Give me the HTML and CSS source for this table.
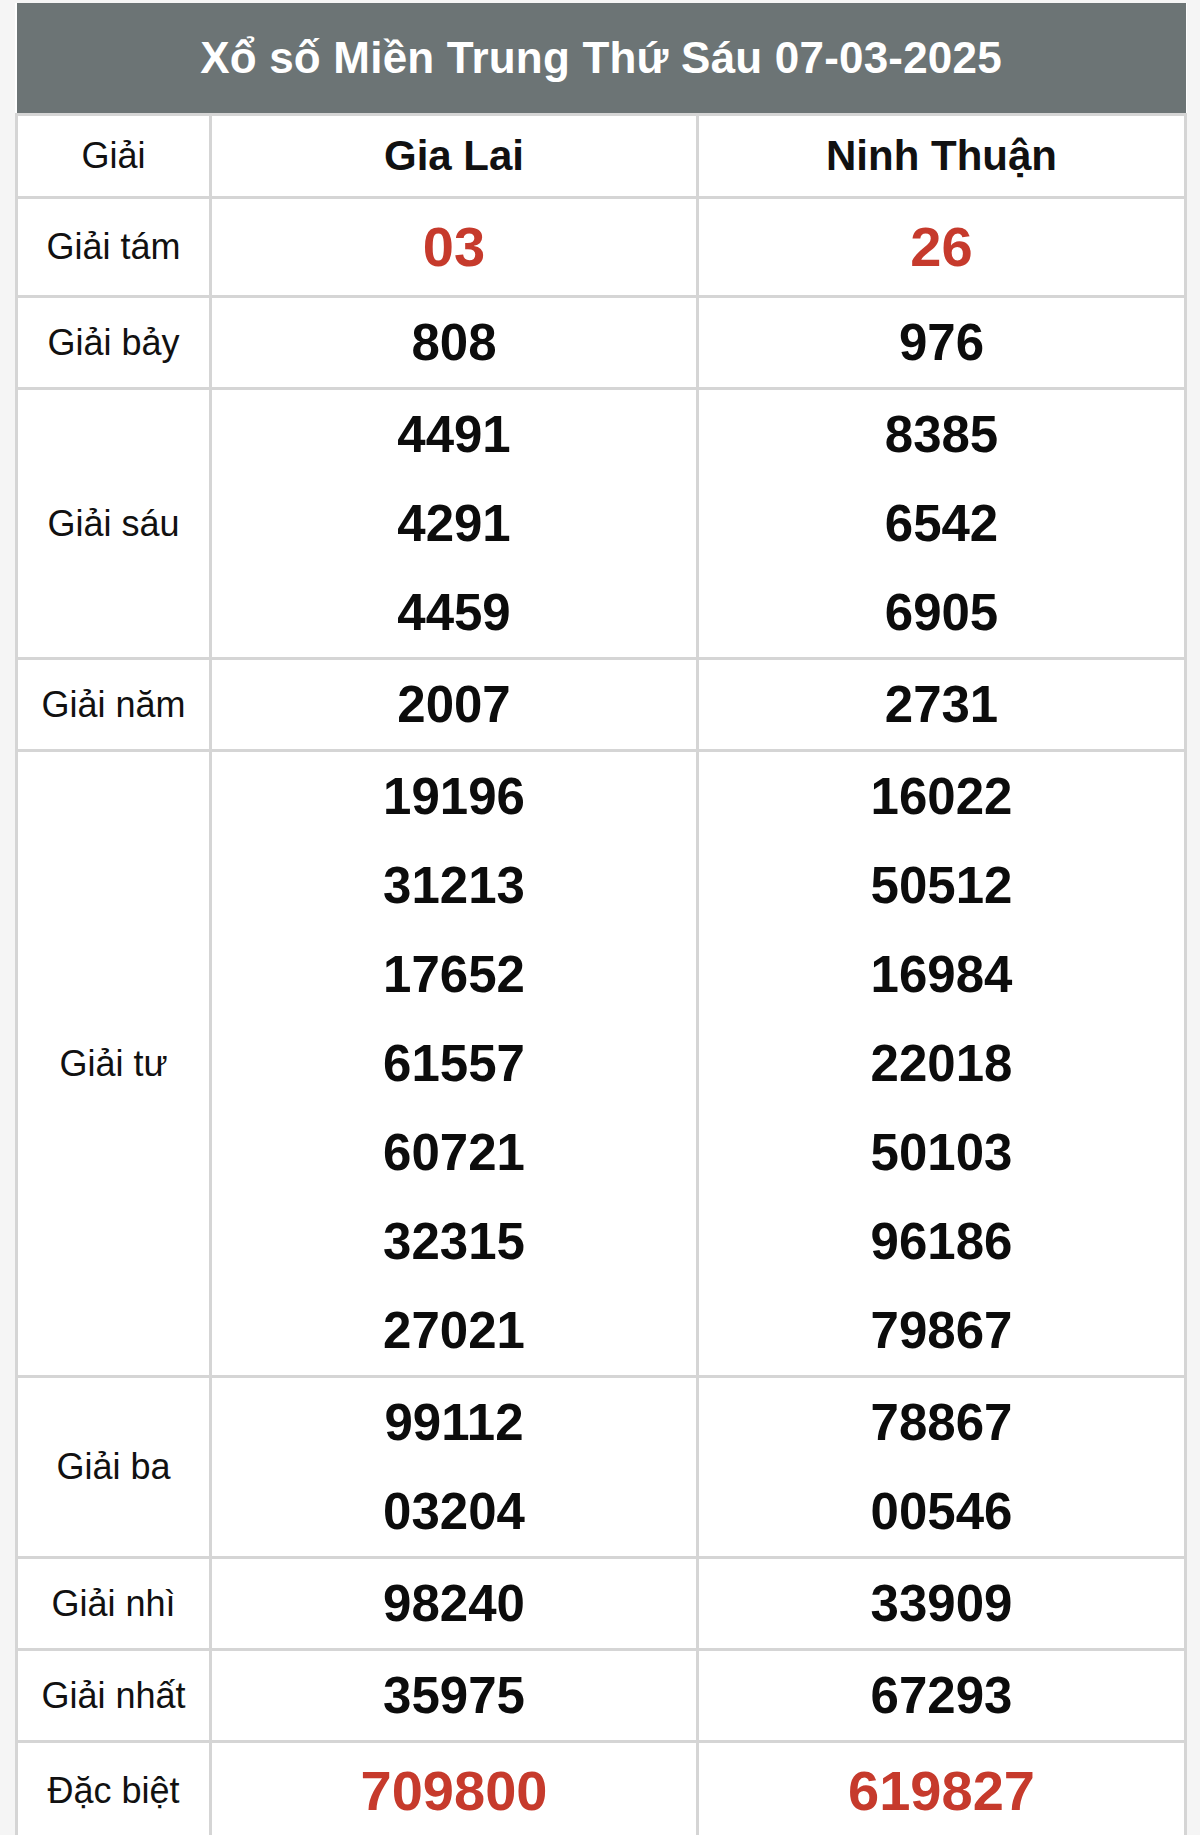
FILE: index.html
```html
<!DOCTYPE html>
<html lang="vi">
<head>
<meta charset="utf-8">
<title>Xổ số Miền Trung Thứ Sáu 07-03-2025</title>
<link rel="stylesheet" href="styles.css">
</head>
<body>
<div class="page">
  <table class="kq">
    <colgroup>
      <col class="c-label">
      <col class="c-prov">
      <col class="c-prov2">
    </colgroup>
    <thead>
      <tr><th class="title" colspan="3">Xổ số Miền Trung Thứ Sáu 07-03-2025</th></tr>
      <tr class="head">
        <td class="label">Giải</td>
        <th class="prov">Gia Lai</th>
        <th class="prov">Ninh Thuận</th>
      </tr>
    </thead>
    <tbody>
      <tr class="big">
        <td class="label">Giải tám</td>
        <td><div class="num red">03</div></td>
        <td><div class="num red">26</div></td>
      </tr>
      <tr>
        <td class="label">Giải bảy</td>
        <td><div class="num">808</div></td>
        <td><div class="num">976</div></td>
      </tr>
      <tr>
        <td class="label">Giải sáu</td>
        <td><div class="num">4491</div><div class="num">4291</div><div class="num">4459</div></td>
        <td><div class="num">8385</div><div class="num">6542</div><div class="num">6905</div></td>
      </tr>
      <tr>
        <td class="label">Giải năm</td>
        <td><div class="num">2007</div></td>
        <td><div class="num">2731</div></td>
      </tr>
      <tr>
        <td class="label">Giải tư</td>
        <td><div class="num">19196</div><div class="num">31213</div><div class="num">17652</div><div class="num">61557</div><div class="num">60721</div><div class="num">32315</div><div class="num">27021</div></td>
        <td><div class="num">16022</div><div class="num">50512</div><div class="num">16984</div><div class="num">22018</div><div class="num">50103</div><div class="num">96186</div><div class="num">79867</div></td>
      </tr>
      <tr>
        <td class="label">Giải ba</td>
        <td><div class="num">99112</div><div class="num">03204</div></td>
        <td><div class="num">78867</div><div class="num">00546</div></td>
      </tr>
      <tr>
        <td class="label">Giải nhì</td>
        <td><div class="num">98240</div></td>
        <td><div class="num">33909</div></td>
      </tr>
      <tr>
        <td class="label">Giải nhất</td>
        <td><div class="num">35975</div></td>
        <td><div class="num">67293</div></td>
      </tr>
      <tr class="big">
        <td class="label">Đặc biệt</td>
        <td><div class="num red">709800</div></td>
        <td><div class="num red">619827</div></td>
      </tr>
    </tbody>
  </table>
</div>
</body>
</html>
```

FILE: styles.css
```css
html, body {
  margin: 0;
  padding: 0;
  background: #f5f5f5;
}

.page {
  padding: 3px 15px 0 15px;
  font-family: "Liberation Sans", Arial, sans-serif;
  color: #111;
}

.kq {
  width: 1169px;
  border-collapse: collapse;
  table-layout: fixed;
  background: #fff;
}

.c-label { width: 194px; }
.c-prov { width: 487px; }
.c-prov2 { width: 488px; }

.kq td, .kq th {
  border: 3px solid #d5d5d5;
  padding: 0;
  text-align: center;
  vertical-align: middle;
}

.kq th.title {
  background: #6c7475;
  color: #fff;
  font-size: 44px;
  font-weight: bold;
  height: 110px;
  border: none;
  border-bottom: 3px solid #d5d5d5;
  letter-spacing: 0.2px;
}

.head td, .head th {
  height: 80px;
}

.kq th.prov {
  font-size: 42px;
  font-weight: bold;
  color: #111;
}

.label {
  font-size: 36px;
  font-weight: normal;
  color: #111;
}

.num {
  height: 89px;
  line-height: 89px;
  font-size: 51px;
  font-weight: bold;
  color: #0c0c0c;
}

.big .num {
  height: 96px;
  line-height: 96px;
}

.num.red {
  color: #c63a2c;
  font-size: 56px;
}
```
